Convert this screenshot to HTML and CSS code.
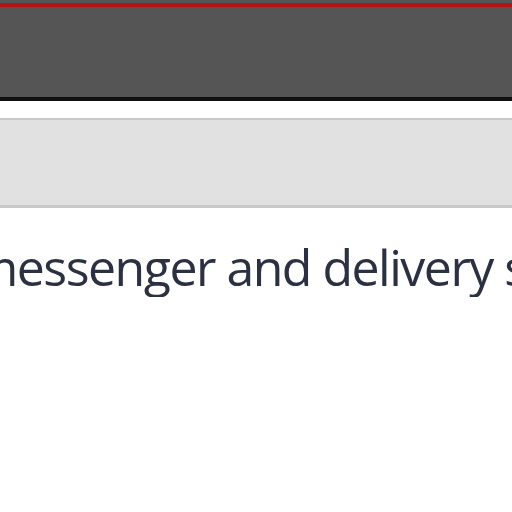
FILE: index.html
```html
<!DOCTYPE html>
<html>
<head>
<meta charset="utf-8">
<link rel="stylesheet" href="styles.css">
</head>
<body>
<header class="topbar">
  <div class="accent"></div>
  <div class="bar-body"></div>
</header>
<div class="spacer"></div>
<div class="subbar"></div>
<main class="content">
  <p class="lead">messenger and delivery services</p>
</main>
</body>
</html>
```
FILE: styles.css
```css
html, body {
  margin: 0;
  padding: 0;
  background: #ffffff;
  overflow: hidden;
  width: 512px;
  height: 512px;
}
.topbar {
  background: #555555;
  padding-top: 3px;
  border-bottom: 4px solid #111111;
}
.accent {
  height: 4px;
  background: #b51212;
}
.bar-body {
  height: 90px;
}
.spacer {
  height: 17px;
}
.subbar {
  height: 85px;
  background: #e1e1e1;
  border-top: 2px solid #c9c9c9;
  border-bottom: 3px solid #c9c9c9;
}
.content {
  overflow: hidden;
}
.lead {
  margin: 29px 0 0 -28px;
  white-space: nowrap;
  font-family: "Open Sans", sans-serif;
  font-size: 50px;
  line-height: 60px;
  letter-spacing: -1.5px;
  color: #2c3142;
}
```
